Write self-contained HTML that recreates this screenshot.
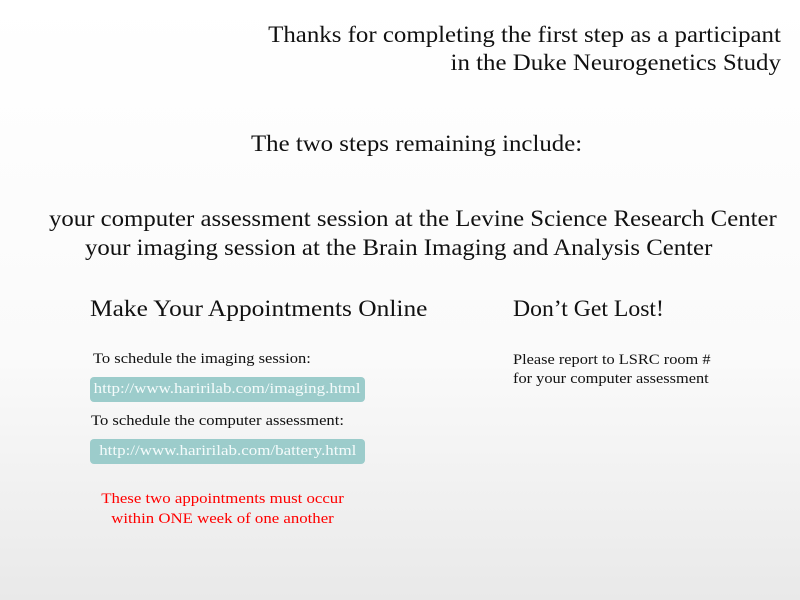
<!DOCTYPE html>
<html><head><style>
html,body{margin:0;padding:0}
body{width:800px;height:600px;position:relative;overflow:hidden;font-family:"Liberation Serif",serif;color:#111;background:linear-gradient(#fff 0%,#fafafa 60%,#e9e9e9 100%)}
.a{position:absolute;white-space:nowrap}
.big{font-size:23px}
.sm{font-size:15px}
.L{transform-origin:left top}
.R{transform-origin:right top}
.C{transform-origin:center top}
.box{position:absolute;left:90px;width:275px;height:25px;background:#9ccccb;border-radius:4px;color:#f4fbfb;font-size:15px;line-height:25px;text-align:center}
.box span{display:inline-block;transform:scaleX(1.13)}
</style></head><body>
<div class="a big R" style="right:19px;top:21px;text-align:right;line-height:28px;transform:scaleX(1.082)">Thanks for completing the first step as a participant<br>in the Duke Neurogenetics Study</div>
<div class="a big L" style="left:251px;top:131px;transform:scaleX(1.08)">The two steps remaining include:</div>
<div class="a big L" style="left:49px;top:206px;transform:scaleX(1.078)">your computer assessment session at the Levine Science Research Center</div>
<div class="a big L" style="left:85px;top:235px;transform:scaleX(1.078)">your imaging session at the Brain Imaging and Analysis Center</div>
<div class="a big L" style="left:90px;top:296px;transform:scaleX(1.105)">Make Your Appointments Online</div>
<div class="a big L" style="left:513px;top:296px;transform:scaleX(1.03)">Don’t Get Lost!</div>
<div class="a sm L" style="left:93px;top:351px;transform:scaleX(1.1)">To schedule the imaging session:</div>
<div class="box" style="top:377px"><span>http://www.haririlab.com/imaging.html</span></div>
<div class="a sm L" style="left:91px;top:413px;transform:scaleX(1.105)">To schedule the computer assessment:</div>
<div class="box" style="top:439px"><span>http://www.haririlab.com/battery.html</span></div>
<div class="a sm C" style="left:101px;top:489px;color:#f00;text-align:center;line-height:20px;width:243px;transform:scaleX(1.12)">These two appointments must occur<br>within ONE week of one another</div>
<div class="a sm L" style="left:513px;top:351px;line-height:19px;transform:scaleX(1.09)">Please report to LSRC room #<br>for your computer assessment</div>
</body></html>
